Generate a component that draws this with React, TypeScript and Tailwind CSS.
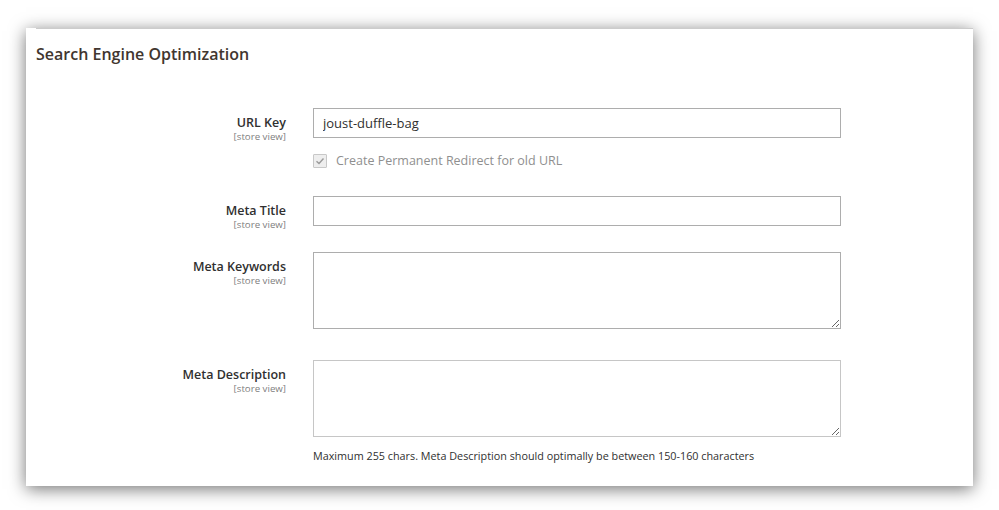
import React from 'react';

const font = { fontFamily: '"Open Sans", "Liberation Sans", sans-serif' };

const FieldLabel: React.FC<{ text: string }> = ({ text }) => (
  <div className="w-[260px] h-[30px] shrink-0 pt-[7px] text-right">
    <div className="text-[12.5px] leading-[16px] font-semibold text-[#303030]">{text}</div>
    <div className="text-[9.7px] leading-[12px] text-[#808080]">[store view]</div>
  </div>
);

export default function App() {
  return (
    <div className="min-h-[510px] w-[999px] bg-white p-[26px]" style={font}>
      {/* Panel */}
      <div className="w-[947px] h-[458px] bg-white shadow-[0_3px_16px_rgba(0,0,0,0.55)]">
        <div className="ml-[10px] mt-[2px] h-px bg-[#cccccc]" />

        <h2 className="ml-[10px] mt-[14px] text-[16px] leading-[22px] font-semibold text-[#41362f]">
          Search Engine Optimization
        </h2>

        {/* URL Key */}
        <div className="mt-[43px] flex gap-[27px]">
          <FieldLabel text="URL Key" />
          <div className="w-[528px]">
            <input
              readOnly
              value="joust-duffle-bag"
              className="block w-full h-[30px] border border-[#adadad] px-[9px] text-[13px] text-[#303030] outline-none"
              style={font}
            />
            <div className="mt-[15px] flex items-center h-[16px]">
              <span className="flex items-center justify-center w-[14px] h-[14px] border border-[#c8c8c8] bg-[#eeeeee] rounded-[1px]">
                <svg width="10" height="10" viewBox="0 0 10 10">
                  <path d="M1.5 5.2 L4 7.5 L8.5 2.5" fill="none" stroke="#9a9a9a" strokeWidth="1.4" />
                </svg>
              </span>
              <span className="ml-[9px] text-[12.5px] text-[#8f8f8f]">Create Permanent Redirect for old URL</span>
            </div>
          </div>
        </div>

        {/* Meta Title */}
        <div className="mt-[27px] flex gap-[27px]">
          <FieldLabel text="Meta Title" />
          <input
            readOnly
            className="block w-[528px] h-[30px] border border-[#adadad] px-[9px] text-[13px] outline-none"
            style={font}
          />
        </div>

        {/* Meta Keywords */}
        <div className="mt-[26px] flex gap-[27px]">
          <FieldLabel text="Meta Keywords" />
          <textarea
            readOnly
            className="block w-[528px] h-[77px] border border-[#adadad] outline-none"
          />
        </div>

        {/* Meta Description */}
        <div className="mt-[31px] flex gap-[27px]">
          <FieldLabel text="Meta Description" />
          <div className="w-[528px]">
            <textarea
              readOnly
              className="block w-full h-[77px] border border-[#c6c6c6] outline-none"
            />
            <div className="mt-[11px] text-[10.8px] leading-[16px] text-[#303030]">
              Maximum 255 chars. Meta Description should optimally be between 150-160 characters
            </div>
          </div>
        </div>
      </div>
    </div>
  );
}
